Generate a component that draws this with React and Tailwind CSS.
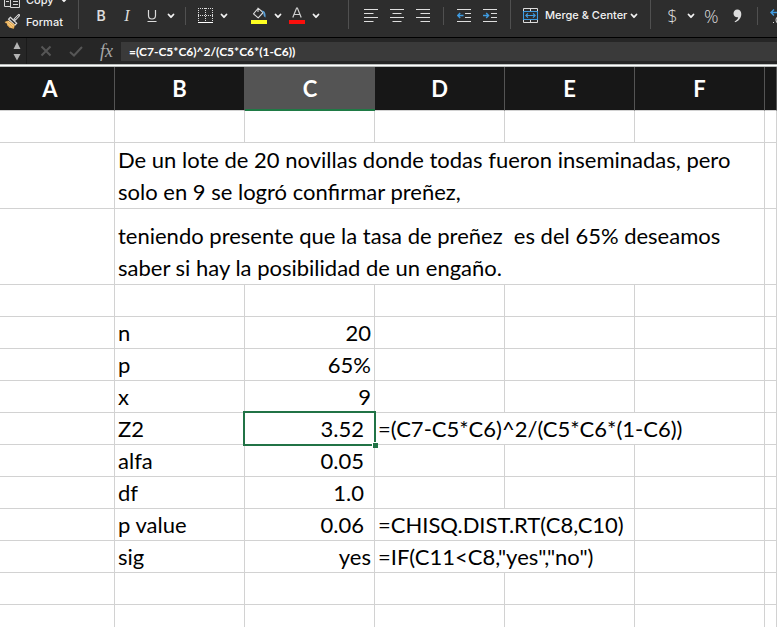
import React from "react";

function Caret() {
  return (
    <svg width="8" height="6" viewBox="0 0 8 6" fill="none" stroke="#f2f2f2" strokeWidth="1.8" strokeLinecap="round" strokeLinejoin="round">
      <path d="M1.5 1.5 4 4.2 6.5 1.5" />
    </svg>
  );
}

function CaretButton({ label }) {
  return (
    <button aria-label={label} className="flex h-6 w-[14px] shrink-0 items-center justify-center">
      <Caret />
    </button>
  );
}

function Tool({ label, className = "w-[26px]", children }) {
  return (
    <button aria-label={label} className={`flex h-6 shrink-0 items-center justify-center ${className}`}>
      {children}
    </button>
  );
}

function Divider() {
  return <div className="mx-[7px] h-[18px] w-px shrink-0 bg-[#505050]" />;
}

function Group({ className = "", children }) {
  return (
    <div className="flex h-[31px] shrink-0">
      <div className={`flex items-center ${className}`}>{children}</div>
      <div className="h-[29px] w-px bg-[#505050]" />
    </div>
  );
}

function Lines({ d }) {
  return (
    <svg width="14" height="14" viewBox="0 0 14 14" stroke="#dedede" strokeWidth="1" fill="none">
      <path d={d} />
    </svg>
  );
}

function IndentIcon({ arrow }) {
  return (
    <svg width="14" height="14" viewBox="0 0 14 14" fill="none">
      <path d="M0 .5h14M8 4.5h6M8 8.5h6M0 12.5h14" stroke="#dedede" />
      <path d={arrow} stroke="#3f9be0" strokeWidth="1.4" />
    </svg>
  );
}

function Toolbar() {
  return (
    <div className="flex h-[37px] shrink-0 items-start overflow-hidden bg-[#2d2d2d] text-[#f2f2f2]">
      <div className="flex h-[37px] shrink-0">
        <div className="flex w-[78px] flex-col justify-end pb-1 pl-1 text-[11px] font-medium">
          <button className="flex h-[22px] shrink-0 items-center gap-[6px]">
            <svg width="16" height="16" viewBox="0 0 16 16" fill="none" stroke="#d6d6d6">
              <path d="M6.500 14.500H.5V1.500h5M2 6.500h3M2 9.500h3" />
              <path d="M6.500 3.500h6l3 3v9h-9zM9 9.500h5M9 12.500h5" />
            </svg>
            <span>Copy</span>
            <Caret />
          </button>
          <button className="flex h-[22px] shrink-0 items-center gap-[6px]">
            <svg width="16" height="16" viewBox="0 0 16 16" fill="none">
              <path d="m14.800 1.300-4 4.200" stroke="#d8d8d8" strokeWidth="2.600" strokeLinecap="round" />
              <path d="m14.600 1.500-3.600 3.800" stroke="#2d2d2d" strokeWidth=".9" />
              <path d="m6.300 3.300 6.400 5.900-1.800 1.900-6.300-5.900z" fill="#2d2d2d" stroke="#dedede" strokeWidth="1.200" />
              <path d="M4.200 6.400.6 7.900l1.500 1.700 1.200-.3-.4 1.700 2.600 2.800 4.400 1 1-4z" fill="#e8ab51" />
              <path d="m4 7.200 5.800 5.200M2.500 8.200l5.700 5.600" stroke="#fbe0a8" strokeWidth=".8" />
            </svg>
            <span>Format</span>
          </button>
        </div>
        <div className="h-[29px] w-px bg-[#505050]" />
      </div>

      <Group className="pl-[9px] pr-[25px]">
        <Tool label="Bold"><span className="font-['Inter'] text-sm font-semibold text-[#dcdcdc]">B</span></Tool>
        <Tool label="Italic"><span className="font-['Liberation_Serif'] text-base italic text-[#dcdcdc]">I</span></Tool>
        <Tool label="Underline" className="w-6">
          <svg width="10" height="14" viewBox="0 0 10 14" fill="none" stroke="#dcdcdc">
            <path d="M1.500 1v5.500a3.500 3.500 0 0 0 7 0V1" strokeWidth="1.200" />
            <path d="M.5 12.500h9" />
          </svg>
        </Tool>
        <CaretButton label="Underline options" />
        <Divider />
        <Tool label="Bottom border" className="w-6">
          <svg width="15" height="15" viewBox="0 0 15 15" fill="none" stroke="#dcdcdc">
            <path d="M0 .5h15M0 7.500h15M.5 0v14M7.500 0v14M14.500 0v14" strokeDasharray="1 1" />
            <path d="M0 14.500h15" stroke="#ffffff" />
          </svg>
        </Tool>
        <CaretButton label="Border options" />
        <Tool label="Fill color" className="ml-4 w-6">
          <svg width="16" height="17" viewBox="0 0 16 17" fill="none">
            <path d="M7 1.500 2.500 6.800l4.700 4 5-5.300L7 1.200V5" stroke="#dcdcdc" strokeWidth="1.100" strokeLinejoin="round" />
            <path d="M10.500 3.700c2.800-.2 4.500 1.600 4 6.800-1.800-.8-2.200-2.500-2-4.500z" fill="#5a9fd6" />
            <path d="M0 13h16v4H0z" fill="#ffff22" />
          </svg>
        </Tool>
        <CaretButton label="Fill color options" />
        <Tool label="Font color" className="w-6">
          <svg width="16" height="17" viewBox="0 0 16 17" fill="none">
            <path d="M3.800 10.500 7.600 1h.8l3.800 9.500M5 7.500h6" stroke="#cfcfcf" strokeWidth="1.200" />
            <path d="M0 13h16v4H0z" fill="#fb0f0c" />
          </svg>
        </Tool>
        <CaretButton label="Font color options" />
      </Group>

      <Group className="pl-[9px] pr-[7px]">
        <Tool label="Align left"><Lines d="M0 .5h14M0 4.500h9.500M0 8.500h14M0 12.500h9.500" /></Tool>
        <Tool label="Center"><Lines d="M0 .5h14M2.500 4.500h9M0 8.500h14M2.500 12.500h9" /></Tool>
        <Tool label="Align right"><Lines d="M0 .5h14M4.500 4.500H14M0 8.500h14M4.500 12.500H14" /></Tool>
        <Divider />
        <Tool label="Decrease indent"><IndentIcon arrow="M6.500 6.500H1M3.200 4 .8 6.500 3.200 9" /></Tool>
        <Tool label="Increase indent"><IndentIcon arrow="M0 6.500h5.500M3.200 4l2.400 2.500L3.200 9" /></Tool>
      </Group>

      <Group className="pl-3 pr-[9px]">
        <button className="flex h-6 items-center gap-[7px] text-[11px] font-medium">
          <svg width="15" height="15" viewBox="0 0 15 15" fill="none">
            <path d="M.5 3.500v-3h14v3M7.500 .5v3M.5 11.500v3h14v-3M7.500 11.500v3" stroke="#dcdcdc" />
            <path d="M.5 3.500h14v8H.5zM3 7.500h9M5 5.300 2.800 7.500 5 9.700M10 5.300l2.200 2.200L10 9.700" stroke="#3f9be0" strokeWidth="1.100" />
          </svg>
          <span className="whitespace-nowrap">Merge &amp; Center</span>
        </button>
        <CaretButton label="Merge options" />
      </Group>

      <div className="flex h-[31px] min-w-0 items-center overflow-hidden pl-[9px] font-['Open_Sans'] text-lg font-light text-[#dcdcdc]">
        <Tool label="Currency" className="w-6">$</Tool>
        <CaretButton label="Currency options" />
        <Tool label="Percent">%</Tool>
        <Tool label="Comma style">
          <svg width="9" height="14" viewBox="0 0 9 14" fill="#dcdcdc">
            <path d="M4.200.5C6.800.5 8.300 2.400 8.300 5c0 3.900-2.500 7-6.300 8.300l-.4-.9C3.700 11.300 5 9.900 5.200 8.200 2.700 8.800.5 7 .5 4.500.5 2.200 2 .5 4.200.5z" />
          </svg>
        </Tool>
        <Divider />
        <Tool label="Increase decimal" className="ml-[5px] w-5">
          <svg width="20" height="16" viewBox="0 0 20 16" fill="none">
            <path d="M10 4.500H1M4 1.500l-3 3 3 3" stroke="#3f9be0" strokeWidth="1.400" />
            <path d="M3 14.500h1" stroke="#dcdcdc" strokeWidth="1.200" />
            <ellipse cx="8" cy="12" rx="2" ry="3" stroke="#dcdcdc" />
          </svg>
        </Tool>
      </div>
    </div>
  );
}

function FormulaBar() {
  return (
    <div className="flex h-[27px] shrink-0 items-center border-t border-black bg-[#262626]">
      <div className="flex h-full w-[27px] shrink-0 items-center justify-end border-r border-[#1b1b1b] pr-[5px]">
        <button aria-label="Name box">
          <svg width="8" height="20" viewBox="0 0 8 20" fill="#b4b4b4">
            <path d="M4 1 7.500 8h-7zM.5 13h7L4 19.500z" />
          </svg>
        </button>
      </div>
      <button aria-label="Cancel" className="flex w-[38px] shrink-0 justify-center">
        <svg width="12" height="12" viewBox="0 0 12 12" stroke="#565656" strokeWidth="2">
          <path d="m1.500 1.500 9 9M10.500 1.500l-9 9" />
        </svg>
      </button>
      <button aria-label="Enter" className="flex w-[22px] shrink-0 justify-center">
        <svg width="14" height="11" viewBox="0 0 14 11" fill="none" stroke="#565656" strokeWidth="2">
          <path d="m1 6 4 3.500L13 1" />
        </svg>
      </button>
      <label htmlFor="formula" className="w-[34px] shrink-0 pr-2 text-right font-['Liberation_Serif'] text-lg leading-5 italic text-[#a8a8a8]">
        fx
      </label>
      <input
        id="formula"
        defaultValue="=(C7-C5*C6)^2/(C5*C6*(1-C6))"
        className="h-[19px] min-w-0 flex-1 bg-[#3a3a3a] pl-2 font-['Lato'] text-xs font-bold text-white outline-none"
      />
    </div>
  );
}

const COLUMNS = ["A", "B", "C", "D", "E", "F", ""];

const ROWS = [
  { label: "n", value: "20" },
  { label: "p", value: "65%" },
  { label: "x", value: "9" },
  { label: "Z2", value: "3.52", decimal: true, selected: true, note: "=(C7-C5*C6)^2/(C5*C6*(1-C6))", span: 3 },
  { label: "alfa", value: "0.05", decimal: true },
  { label: "df", value: "1.0", decimal: true },
  { label: "p value", value: "0.06", decimal: true, note: "=CHISQ.DIST.RT(C8,C10)", span: 2 },
  { label: "sig", value: "yes", note: '=IF(C11<C8,"yes","no")', span: 2 },
];

function headerClass(name) {
  if (name === "C") return "border-b-2 border-[#1f7a45] bg-[#545454] p-0";
  const base = "border-r border-b border-r-[#545454] border-b-[#d2d2d2] bg-[#171717]";
  return name === "A" ? `${base} py-0 pr-[14px] pl-0` : `${base} p-0`;
}

function Cell({ className = "", children, ...rest }) {
  return (
    <td className={`border-r border-b border-[#d2d2d2] p-0 align-bottom whitespace-pre ${className}`} {...rest}>
      {children}
    </td>
  );
}

function EmptyRow() {
  return (
    <tr className="h-8">
      {COLUMNS.map((_, i) => <Cell key={i} />)}
    </tr>
  );
}

function Sheet() {
  return (
    <table className="w-full shrink-0 table-fixed border-separate border-spacing-0 bg-white font-['Lato'] text-[22px] text-black">
      <colgroup>
        <col className="w-[115px]" />
        <col className="w-[130px]" />
        <col className="w-[130px]" />
        <col className="w-[130px]" />
        <col className="w-[130px]" />
        <col className="w-[130px]" />
        <col />
      </colgroup>
      <thead>
        <tr className="h-11 font-bold text-white">
          {COLUMNS.map((name, i) => (
            <th key={i} scope="col" className={headerClass(name)}>
              {name}
            </th>
          ))}
        </tr>
      </thead>
      <tbody>
        <EmptyRow />
        <tr className="h-[66px]">
          <Cell />
          <Cell colSpan={5} className="pl-[3px] leading-8">
            De un lote de 20 novillas donde todas fueron inseminadas, pero<br />
            solo en 9 se logró confirmar preñez,
          </Cell>
          <Cell />
        </tr>
        <tr className="h-[76px]">
          <Cell />
          <Cell colSpan={5} className="pl-[3px] leading-8">
            {"teniendo presente que la tasa de preñez  es del 65% deseamos"}<br />
            saber si hay la posibilidad de un engaño.
          </Cell>
          <Cell />
        </tr>
        <EmptyRow />
        {ROWS.map((row) => (
          <tr key={row.label} className="h-8 leading-[31px]">
            <Cell />
            <Cell className="pl-[3px]">{row.label}</Cell>
            <Cell className={`relative text-right ${row.decimal ? "pr-[10px]" : "pr-[3px]"}`}>
              {row.value}
              {row.selected && (
                <span className="absolute -inset-[2px] z-10 border-2 border-[#217346]">
                  <span className="absolute -right-1 -bottom-1 box-content size-[5px] border-t border-l border-white bg-[#217346]" />
                </span>
              )}
            </Cell>
            {row.note
              ? <Cell colSpan={row.span} className="pl-[3px]">{row.note}</Cell>
              : <><Cell /><Cell /><Cell /></>}
            {row.span === 2 && <Cell />}
            <Cell />
          </tr>
        ))}
        <EmptyRow />
        <EmptyRow />
      </tbody>
    </table>
  );
}

export default function App() {
  return (
    <div className="flex h-screen flex-col overflow-hidden bg-white font-['Inter',sans-serif]">
      <Toolbar />
      <FormulaBar />
      <div className="h-[3px] shrink-0 border-y border-[#b9bdbb] bg-white" />
      <Sheet />
    </div>
  );
}
